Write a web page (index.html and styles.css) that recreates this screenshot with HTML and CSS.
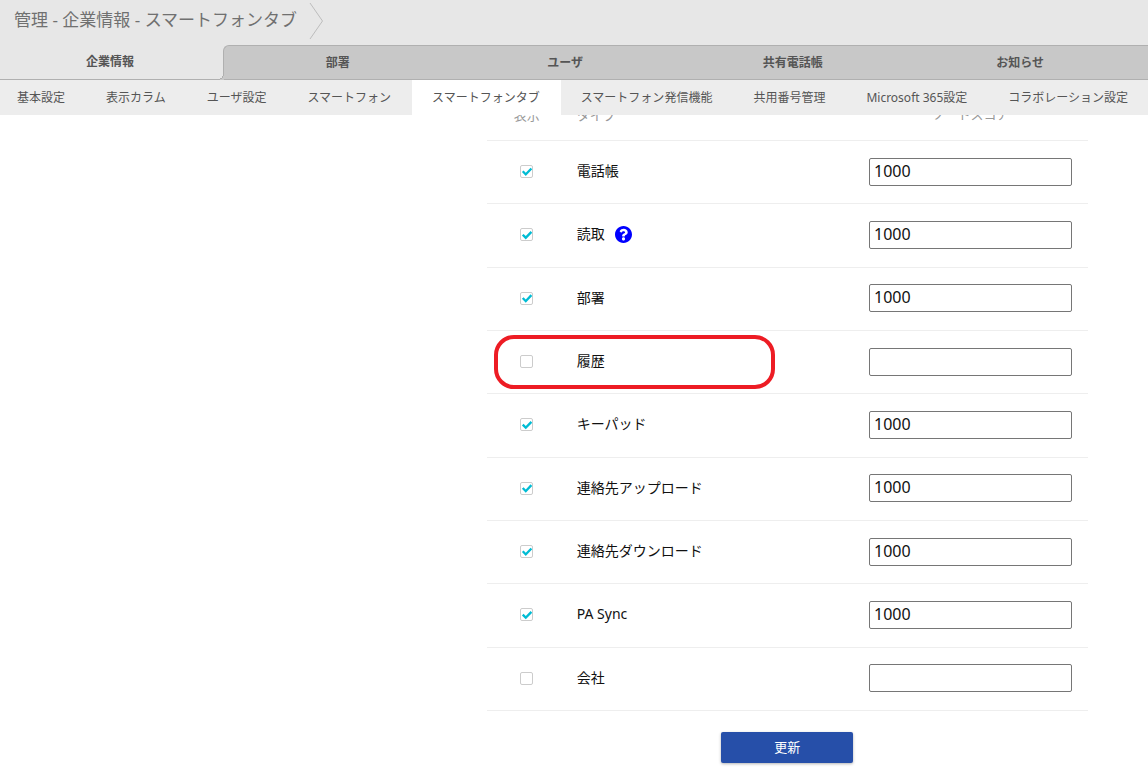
FILE: index.html
```html
<!DOCTYPE html>
<html lang="ja">
<head>
    <meta charset="UTF-8">
    <meta name="viewport" content="width=device-width, initial-scale=1.0">
    <title>管理 - 企業情報 - スマートフォンタブ</title>
    <link rel="stylesheet" href="styles.css">
</head>
<body>
    <header class="page-header">
        <div class="title-bar">
            <h1 class="title">管理 - 企業情報 - スマートフォンタブ</h1>
            <svg class="chevron" width="15" height="38" viewBox="0 0 15 38" aria-hidden="true">
                <path d="M1 1L13.500 19L1 37" fill="none" stroke="#bdbdbd" stroke-width="1"/>
            </svg>
        </div>
        <nav class="main-tabs">
            <a href="#" class="main-tab active">企業情報</a>
            <div class="other-tabs">
                <a href="#" class="main-tab">部署</a>
                <a href="#" class="main-tab">ユーザ</a>
                <a href="#" class="main-tab">共有電話帳</a>
                <a href="#" class="main-tab">お知らせ</a>
            </div>
        </nav>
        <nav class="sub-tabs">
            <a href="#" class="sub-tab">基本設定</a>
            <a href="#" class="sub-tab">表示カラム</a>
            <a href="#" class="sub-tab">ユーザ設定</a>
            <a href="#" class="sub-tab">スマートフォン</a>
            <a href="#" class="sub-tab active">スマートフォンタブ</a>
            <a href="#" class="sub-tab">スマートフォン発信機能</a>
            <a href="#" class="sub-tab">共用番号管理</a>
            <a href="#" class="sub-tab">Microsoft 365設定</a>
            <a href="#" class="sub-tab">コラボレーション設定</a>
        </nav>
    </header>

    <main class="content">
        <form class="tab-form">
            <table class="tab-table">
                <thead>
                    <tr>
                        <th class="col-show">表示</th>
                        <th class="col-type">タイプ</th>
                        <th class="col-score">ソートスコア</th>
                    </tr>
                </thead>
                <tbody>
                    <tr>
                        <td class="col-show"><input type="checkbox" class="check" id="show1" checked></td>
                        <td class="col-type"><label for="show1">電話帳</label></td>
                        <td class="col-score"><input type="text" class="score" aria-label="電話帳" value="1000"></td>
                    </tr>
                    <tr>
                        <td class="col-show"><input type="checkbox" class="check" id="show2" checked></td>
                        <td class="col-type">
                            <div class="type-help">
                                <label for="show2">読取</label>
                                <svg class="help" width="17" height="17" viewBox="8 8 496 496" aria-hidden="true">
                                    <path fill="#0000ff" d="M504 256c0 136.997-111.043 248-248 248S8 392.997 8 256C8 119.083 119.043 8 256 8s248 111.083 248 248zM262.655 90c-54.497 0-89.255 22.957-116.549 63.758-3.536 5.286-2.353 12.415 2.715 16.258l34.699 26.31c5.205 3.947 12.621 3.008 16.665-2.122 17.864-22.658 30.113-35.797 57.303-35.797 20.429 0 45.698 13.148 45.698 32.958 0 14.976-12.363 22.667-32.534 33.976C247.128 238.528 216 254.941 216 296v4c0 6.627 5.373 12 12 12h56c6.627 0 12-5.373 12-12v-1.333c0-28.462 83.186-29.647 83.186-106.667 0-58.002-60.165-102-116.531-102zM256 338c-25.365 0-46 20.635-46 46 0 25.364 20.635 46 46 46s46-20.636 46-46c0-25.365-20.635-46-46-46z"/>
                                </svg>
                            </div>
                        </td>
                        <td class="col-score"><input type="text" class="score" aria-label="読取" value="1000"></td>
                    </tr>
                    <tr>
                        <td class="col-show"><input type="checkbox" class="check" id="show3" checked></td>
                        <td class="col-type"><label for="show3">部署</label></td>
                        <td class="col-score"><input type="text" class="score" aria-label="部署" value="1000"></td>
                    </tr>
                    <tr>
                        <td class="col-show marked"><input type="checkbox" class="check" id="show4"></td>
                        <td class="col-type"><label for="show4">履歴</label></td>
                        <td class="col-score"><input type="text" class="score" aria-label="履歴"></td>
                    </tr>
                    <tr>
                        <td class="col-show"><input type="checkbox" class="check" id="show5" checked></td>
                        <td class="col-type"><label for="show5">キーパッド</label></td>
                        <td class="col-score"><input type="text" class="score" aria-label="キーパッド" value="1000"></td>
                    </tr>
                    <tr>
                        <td class="col-show"><input type="checkbox" class="check" id="show6" checked></td>
                        <td class="col-type"><label for="show6">連絡先アップロード</label></td>
                        <td class="col-score"><input type="text" class="score" aria-label="連絡先アップロード" value="1000"></td>
                    </tr>
                    <tr>
                        <td class="col-show"><input type="checkbox" class="check" id="show7" checked></td>
                        <td class="col-type"><label for="show7">連絡先ダウンロード</label></td>
                        <td class="col-score"><input type="text" class="score" aria-label="連絡先ダウンロード" value="1000"></td>
                    </tr>
                    <tr>
                        <td class="col-show"><input type="checkbox" class="check" id="show8" checked></td>
                        <td class="col-type"><label for="show8">PA Sync</label></td>
                        <td class="col-score"><input type="text" class="score" aria-label="PA Sync" value="1000"></td>
                    </tr>
                    <tr>
                        <td class="col-show"><input type="checkbox" class="check" id="show9"></td>
                        <td class="col-type"><label for="show9">会社</label></td>
                        <td class="col-score"><input type="text" class="score" aria-label="会社"></td>
                    </tr>
                </tbody>
            </table>
            <button type="button" class="update">更新</button>
        </form>
    </main>
</body>
</html>
```
FILE: styles.css
```css
*, *::before, *::after {
    box-sizing: border-box;
}
body {
    margin: 0;
    font-family: "Noto Sans", "Noto Sans CJK JP", sans-serif;
    font-size: 14px;
    color: #111;
    background-color: #fff;
    overflow-x: hidden;
}
a {
    color: inherit;
    text-decoration: none;
}

/* Header stays on top, the table scrolls under it */
.page-header {
    position: fixed;
    top: 0;
    left: 0;
    right: 0;
    z-index: 10;
    background-color: #e7e7e7;
    color: #555;
    overflow: hidden;
}
.title-bar {
    display: flex;
    align-items: center;
    gap: 12px;
    height: 45px;
    padding: 0 14px 4px;
}
.title {
    margin: 0;
    padding-bottom: 2px;
    font-size: 17px;
    font-weight: normal;
    line-height: 24px;
    color: #707070;
}
.main-tabs {
    display: flex;
    height: 35px;
    font-size: 12px;
    font-weight: bold;
}
.main-tab {
    flex: 1;
    display: flex;
    align-items: center;
    justify-content: center;
    padding-bottom: 2px;
}
.main-tab.active {
    flex: 0 0 223px;
    padding-right: 3px;
    border-bottom: 1px solid #b0b0b0;
}
.other-tabs {
    flex: 1;
    display: flex;
    position: relative;
    padding-right: 14px;
    background-color: #c8c8c8;
    border: solid #b0b0b0;
    border-width: 1px 0 1px 1px;
    border-top-left-radius: 6px;
}
/* Curved corner where the active tab meets the grey ones */
.other-tabs::before {
    content: "";
    position: absolute;
    left: -6px;
    bottom: -1px;
    width: 6px;
    height: 6px;
    background: radial-gradient(circle at 0 0, #e7e7e7 5px, #b0b0b0 5px, #b0b0b0 6px, #c8c8c8 6px);
}
.sub-tabs {
    display: flex;
    height: 35px;
    background-color: #ededed;
    font-size: 12px;
    white-space: nowrap;
}
.sub-tab {
    flex: none;
    display: flex;
    align-items: center;
    padding: 0 21px 2px 20px;
}
.sub-tab:first-child {
    padding-left: 17px;
}
.sub-tab.active {
    background-color: #fff;
}

.content {
    padding: 88px 60px 10px 0;
    margin-left: 42.4%;
}
.tab-form {
    display: flex;
    flex-direction: column;
    align-items: center;
}
.tab-table {
    width: 100%;
    height: 623px;
    border-collapse: separate;
    border-spacing: 0;
    table-layout: fixed;
}
.tab-table th {
    height: 53px;
    padding: 0;
    font-size: 13px;
    font-weight: normal;
    color: #999;
    border-bottom: 1px solid #eee;
}
.tab-table td {
    height: 63px;
    padding: 0 0 1px;
    border-bottom: 1px solid #eee;
}
.tab-table .col-show {
    width: 80px;
    text-align: center;
}
.tab-table .col-type {
    padding-left: 10px;
    text-align: left;
}
.tab-table td.col-type {
    padding-bottom: 4px;
}
.tab-table .col-score {
    width: 235px;
    padding: 0 16px 1px;
    text-align: center;
}
.type-help {
    display: flex;
    align-items: center;
    gap: 10px;
}
.help {
    margin-top: 2px;
}
.check {
    appearance: none;
    display: block;
    width: 13px;
    height: 13px;
    margin: 0 auto;
    background-color: #fff;
    border: 1px solid #ccc;
    border-radius: 2px;
}
.check:checked::before {
    content: "";
    display: block;
    width: 11px;
    height: 11px;
    background-color: #00bcd4;
    clip-path: polygon(6% 54%, 21% 40%, 41% 60%, 85% 14%, 100% 29%, 41% 90%);
}
.score {
    display: block;
    width: 100%;
    height: 28px;
    padding: 0 4px 2px;
    font-family: inherit;
    font-size: 16px;
    color: #111;
    border: 1px solid #767676;
    border-radius: 2px;
}
.marked {
    position: relative;
}
.marked::after {
    content: "";
    position: absolute;
    top: 4px;
    left: 7px;
    width: 281px;
    height: 54px;
    border: 4px solid #ed1c24;
    border-radius: 20px;
    pointer-events: none;
}
.update {
    width: 132px;
    height: 31px;
    margin-top: 21px;
    padding: 0 0 3px;
    font-family: inherit;
    font-size: 13px;
    color: #fff;
    background-color: #264fa9;
    border: 0;
    border-radius: 2px;
    box-shadow: 0 1px 3px rgba(0, 0, 0, 0.3);
}
```
